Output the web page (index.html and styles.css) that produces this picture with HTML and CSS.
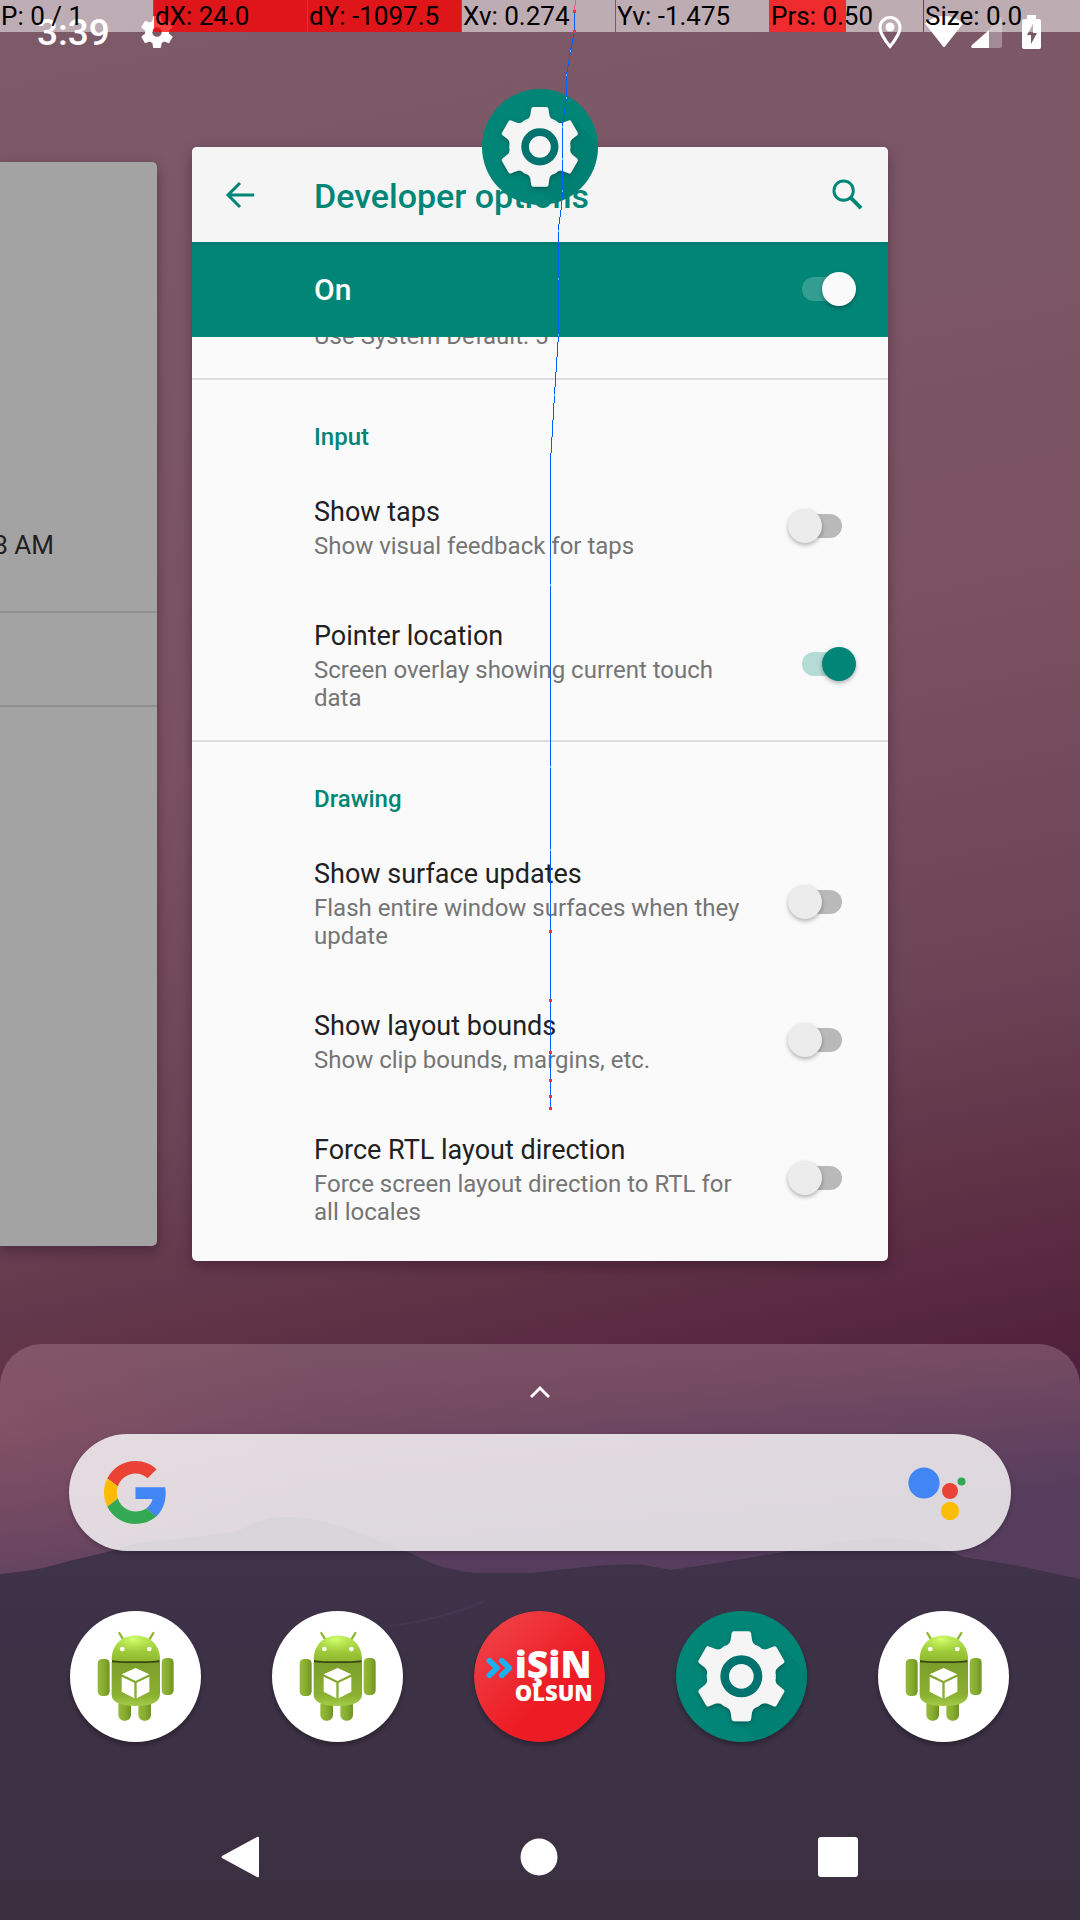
FILE: index.html
```html
<!DOCTYPE html>
<html lang="en">
<head>
<meta charset="utf-8">
<meta name="viewport" content="width=device-width, initial-scale=1">
<title>Recent apps</title>
<link rel="stylesheet" href="styles.css">
</head>
<body>
<svg class="defs" aria-hidden="true">
  <defs>
    <linearGradient id="bot-light" x1="0" y1="0" x2="0" y2="1">
      <stop offset="0" stop-color="#b4e34e"/><stop offset="1" stop-color="#8fb92e"/>
    </linearGradient>
    <linearGradient id="bot-body" x1="0" y1="0" x2="0" y2="1">
      <stop offset="0" stop-color="#7c9e2b"/><stop offset=".75" stop-color="#8cb032"/><stop offset="1" stop-color="#a4cc48"/>
    </linearGradient>
    <linearGradient id="bot-arm" x1="0" y1="0" x2="1" y2="0">
      <stop offset="0" stop-color="#96bb3c"/><stop offset=".5" stop-color="#88ad2e"/><stop offset="1" stop-color="#6f9326"/>
    </linearGradient>
    <radialGradient id="bot-shine" cx=".45" cy=".15" r=".6">
      <stop offset="0" stop-color="#d3ff6e"/><stop offset="1" stop-color="#a2d33a" stop-opacity="0"/>
    </radialGradient>
    <linearGradient id="brand-red" x1="0" y1="0" x2="1" y2="1">
      <stop offset=".1" stop-color="#ef4046"/><stop offset=".6" stop-color="#ed1c24"/>
    </linearGradient>
    <linearGradient id="ridge" x1="0" y1="0" x2="0" y2="1">
      <stop offset="0" stop-color="#3f324a"/><stop offset="1" stop-color="#3b3040"/>
    </linearGradient>
    <filter id="soft" x="-20%" y="-20%" width="140%" height="140%">
      <feDropShadow dx="0" dy="6" stdDeviation="7" flood-color="#00453f" flood-opacity=".6"/>
    </filter>
  </defs>
  <symbol id="bot" viewBox="0 0 393 393">
    <path d="M148 66l12 20M250 66l-12 20" stroke="#8fb733" stroke-width="7" stroke-linecap="round"/>
    <rect x="145" y="265" width="38" height="64" rx="17" fill="url(#bot-arm)"/>
    <rect x="205" y="265" width="38" height="64" rx="17" fill="url(#bot-arm)"/>
    <rect x="83" y="144" width="36" height="111" rx="14" fill="url(#bot-arm)"/>
    <rect x="275" y="141" width="36" height="111" rx="14" fill="url(#bot-arm)"/>
    <path d="M126 146h143v12H126z" fill="#39480f"/>
    <path d="M125 146C125 100 156 74 197.500 74S270 100 270 146Q260 151 197 151T125 146z" fill="url(#bot-light)"/>
    <path d="M125 146C125 100 156 74 197.500 74S270 100 270 146Q260 151 197 151T125 146z" fill="url(#bot-shine)"/>
    <path d="M125 154Q197 160 270 154V250Q270 285 197 285T125 250z" fill="url(#bot-body)"/>
    <circle cx="157" cy="114" r="7" fill="#fff"/><circle cx="238" cy="114" r="7" fill="#fff"/>
    <path d="M197 171l41 19-41 20-42-20zM155 197l38 18v47l-38-20zM200 215l38-18v45l-38 20z" fill="#fff"/>
  </symbol>
  <symbol id="gear" viewBox="0 0 393 393">
    <path d="M320 110L393 185V260L300 393H250L160 320z" fill="#00796b" opacity=".35"/>
    <g filter="url(#soft)" fill="#f5f5f5">
      <circle cx="196" cy="196" r="98"/>
      <g id="teeth" transform="translate(196 196)">
        <path id="tooth" d="M0 0L-52-90L-42-94Q-34-98-32-108L-29-129Q-28-135-22-135H22Q28-135 29-129L32-108Q34-98 42-94L52-90z"/>
        <use href="#tooth" transform="rotate(60)"/><use href="#tooth" transform="rotate(120)"/>
        <use href="#tooth" transform="rotate(180)"/><use href="#tooth" transform="rotate(240)"/>
        <use href="#tooth" transform="rotate(300)"/>
      </g>
    </g>
    <circle cx="196" cy="196" r="50" fill="none" stroke="#00736f" stroke-width="26"/>
  </symbol>
</svg>

<div class="screen">
  <header class="status">
    <time class="clock">3:39</time>
    <svg class="status-gear" viewBox="2 2 20 20" fill="#fff" role="img" aria-label="Settings"><path d="M19.430 12.980c.04-.32.07-.64.07-.98s-.03-.66-.07-.98l2.110-1.650c.19-.15.24-.42.12-.64l-2-3.460c-.12-.22-.39-.3-.61-.22l-2.490 1c-.52-.4-1.080-.73-1.690-.98l-.38-2.650C14.460 2.180 14.250 2 14 2h-4c-.25 0-.46.18-.49.42l-.38 2.650c-.61.25-1.170.59-1.690.98l-2.490-1c-.23-.09-.49 0-.61.22l-2 3.460c-.13.22-.07.49.12.64l2.110 1.650c-.04.32-.07.65-.07.98s.03.66.07.98l-2.110 1.650c-.19.15-.24.42-.12.64l2 3.460c.12.22.39.3.61.22l2.490-1c.52.4 1.080.73 1.690.98l.38 2.650c.03.24.24.42.49.42h4c.25 0 .46-.18.49-.42l.38-2.650c.61-.25 1.170-.59 1.690-.98l2.490 1c.23.09.49 0 .61-.22l2-3.460c.12-.22.07-.49-.12-.64l-2.110-1.650zM12 15a3 3 0 1 1 0-6 3 3 0 0 1 0 6z"/></svg>
    <div class="signals">
      <svg class="pin" viewBox="0 0 24 34" fill="none" role="img" aria-label="Location"><path d="M12 2.500C6.500 2.500 2 6.800 2 12.500C2 19.500 12 31.500 12 31.500S22 19.500 22 12.500C22 6.800 17.500 2.500 12 2.500z" stroke="#fff" stroke-width="3"/><circle cx="12" cy="12" r="4.500" fill="#fff"/></svg>
      <svg class="wifi" viewBox="0 0 38 32" fill="#fff" role="img" aria-label="Wi-Fi"><path d="M0 7.500C11-2.500 27-2.500 38 7.500L20 30.500Q19 31.500 18 30.500z"/></svg>
      <svg class="cell" viewBox="0 0 31 31" fill="#fff" role="img" aria-label="Mobile signal"><path d="M29 0q2 0 2 2v27q0 2-2 2H18V13z" opacity=".3"/><path d="M18 13V31H2q-3 0-1-3z"/></svg>
      <svg class="battery" viewBox="0 0 19 34" fill="#fff" role="img" aria-label="Battery charging"><path fill-rule="evenodd" d="M5 0h9v4h3q2 0 2 2v26q0 2-2 2H2q-2 0-2-2V6q0-2 2-2h3zM11 9L5 20h4v9l6-11h-4z"/></svg>
    </div>
  </header>

  <main class="recents">
    <article class="card card-side" aria-label="Previous app">
      <p class="side-time">8 AM</p>
      <div class="side-row"></div>
    </article>

    <article class="card card-main">
      <div class="toolbar">
        <button class="icon-btn" aria-label="Back"><svg class="arrow" viewBox="0 0 30 28" fill="none" stroke="#008577" stroke-width="3"><path d="M29 14H3M15 2L3 14L15 26"/></svg></button>
        <h1>Developer options</h1>
        <button class="icon-btn" aria-label="Search"><svg class="search-icon" viewBox="0 0 32 32" fill="none" stroke="#008577" stroke-width="3"><circle cx="12" cy="12" r="10"/><path d="M19 19l11 11" stroke-width="4"/></svg></button>
      </div>
      <label class="master"><span>On</span><input class="switch" type="checkbox" checked></label>

      <section class="group clipped">
        <p class="summary">Use System Default: 5</p>
      </section>
      <section class="group">
        <h2>Input</h2>
        <label class="row"><span class="text"><span class="title">Show taps</span><span class="summary">Show visual feedback for taps</span></span><input class="switch" type="checkbox"></label>
        <label class="row"><span class="text"><span class="title">Pointer location</span><span class="summary">Screen overlay showing current touch data</span></span><input class="switch" type="checkbox" checked></label>
      </section>
      <section class="group">
        <h2>Drawing</h2>
        <label class="row"><span class="text"><span class="title">Show surface updates</span><span class="summary">Flash entire window surfaces when they update</span></span><input class="switch" type="checkbox"></label>
        <label class="row"><span class="text"><span class="title">Show layout bounds</span><span class="summary">Show clip bounds, margins, etc.</span></span><input class="switch" type="checkbox"></label>
        <label class="row"><span class="text"><span class="title">Force RTL layout direction</span><span class="summary">Force screen layout direction to RTL for all locales</span></span><input class="switch" type="checkbox"></label>
      </section>
      <button class="app-badge" aria-label="Settings"><svg viewBox="0 0 393 393"><use href="#gear"/></svg></button>
    </article>
  </main>

  <footer class="sheet">
    <svg class="hills" viewBox="0 0 1080 410" preserveAspectRatio="none" aria-hidden="true"><path fill="url(#ridge)" d="M0 64L27 61Q50 57 69 51L103 43L138 33L186 28L234 22C246 18 262 7 282 7C306 6 325 12 344 17L406 41C425 50 440 58 448 58Q465 63 482 63H530L585 57Q625 53 644 55L671 60L723 52L778 43L826 34Q850 29 888 29Q915 29 930 33L964 47L1019 56L1080 69V410H0z"/><path d="M390 116Q440 110 485 91" fill="none" stroke="#5a4060" stroke-width="2" opacity=".3"/></svg>
    <button class="handle" aria-label="All apps"><svg viewBox="0 0 20 14" fill="none" stroke="#fff" stroke-width="3"><path d="M1 12L10 3L19 12"/></svg></button>
    <form class="search">
      <svg class="g-logo" viewBox="0 0 48 48" role="img" aria-label="Google"><path fill="#ea4335" d="M24 9.500c3.540 0 6.710 1.220 9.210 3.600l6.850-6.850C35.900 2.380 30.470 0 24 0 14.620 0 6.510 5.380 2.560 13.220l7.980 6.190C12.430 13.720 17.740 9.500 24 9.500z"/><path fill="#4285f4" d="M46.980 24.550c0-1.570-.15-3.090-.38-4.550H24v9.020h12.940c-.58 2.960-2.260 5.480-4.780 7.180l7.730 6c4.510-4.180 7.090-10.360 7.090-17.650z"/><path fill="#fbbc05" d="M10.530 28.590c-.48-1.450-.76-2.990-.76-4.590s.27-3.140.76-4.590l-7.980-6.190C.92 16.460 0 20.120 0 24c0 3.880.92 7.540 2.560 10.780l7.970-6.190z"/><path fill="#34a853" d="M24 48c6.480 0 11.930-2.130 15.890-5.810l-7.730-6c-2.150 1.450-4.920 2.300-8.160 2.300-6.260 0-11.570-4.220-13.470-9.910l-7.980 6.190C6.510 42.620 14.620 48 24 48z"/></svg>
      <input type="search" aria-label="Search">
      <button type="button" class="assistant" aria-label="Assistant"><svg viewBox="0 0 58 54"><circle cx="16" cy="17" r="15.600" fill="#4285f4"/><circle cx="42" cy="25" r="8" fill="#ea4335"/><circle cx="42" cy="45" r="9.200" fill="#fbbc05"/><circle cx="53.500" cy="15.500" r="4" fill="#34a853"/></svg></button>
    </form>
    <div class="dock">
      <button class="app white" aria-label="App"><svg viewBox="0 0 393 393"><use href="#bot"/></svg></button>
      <button class="app white" aria-label="App"><svg viewBox="0 0 393 393"><use href="#bot"/></svg></button>
      <button class="app" aria-label="İşin Olsun"><svg viewBox="0 0 393 393"><circle cx="196.500" cy="196.500" r="196.500" fill="url(#brand-red)"/><path d="M46 149l23 22-23 22M83 149l23 22-23 22" fill="none" stroke="#1cb0f0" stroke-width="17" stroke-linecap="round" stroke-linejoin="round"/><g fill="#fff" font-family="Open Sans, sans-serif" font-weight="800"><text x="122" y="200" font-size="112">iŞiN</text><text x="122" y="271" font-size="66">OLSUN</text></g></svg></button>
      <button class="app teal" aria-label="Settings"><svg viewBox="0 0 393 393"><use href="#gear"/></svg></button>
      <button class="app white" aria-label="App"><svg viewBox="0 0 393 393"><use href="#bot"/></svg></button>
    </div>
    <nav class="nav">
      <button aria-label="Back"><svg viewBox="0 0 42 42" fill="#fff"><path d="M38 1Q40 0 40 2V40Q40 42 38 41L3 22Q2 21 3 20z"/></svg></button>
      <button aria-label="Home"><svg viewBox="0 0 42 42" fill="#fff"><circle cx="21" cy="21" r="18.500"/></svg></button>
      <button aria-label="Recents"><svg viewBox="0 0 42 42" fill="#fff"><rect x="1" y="1" width="40" height="40" rx="3"/></svg></button>
    </nav>
  </footer>

  <div class="readout">
    <span>P: 0 / 1</span><span class="hot">dX: 24.0</span><span class="hot">dY: -1097.5</span><span>Xv: 0.274</span><span>Yv: -1.475</span><span class="half">Prs: 0.50</span><span class="edge">Size: 0.0</span>
  </div>
  <svg class="trace" viewBox="0 0 1080 1200" width="1080" height="1200" fill="none" shape-rendering="crispEdges" aria-hidden="true">
    <path d="M576 0L574 11" stroke="#f0508c"/>
    <path d="M574.500 11V31L570.500 51L566.500 75V98L562.500 125V191L561.500 207L558.500 228V335L554.500 395L550.500 462V1108" stroke="#0060ff"/>
    <path d="M573 11h3M573 31h3M549 931h3M549 1000h3M549 1052h3M549 1080h3M549 1096h3M549 1108h3" stroke="#ff3030" stroke-width="3"/>
    <path d="M570 51h1M566 75h1M566 98h1M562 127h1M562 159h1M562 191h1M558 231h1M558 279h1M558 335h1M554 395h1M550 585h1M550 767h1M550 850h1" stroke="#5fc0ff" stroke-width="2"/>
  </svg>
</div>
</body>
</html>
```
FILE: styles.css
```css
* { box-sizing: border-box; }

body {
  margin: 0;
  font-family: Roboto, "Noto Sans", sans-serif;
  color: #212121;
}

button {
  border: 0;
  padding: 0;
  background: none;
  cursor: pointer;
}

h1, h2, p { margin: 0; }

svg { display: block; }

.defs {
  position: absolute;
  width: 0;
  height: 0;
}

.screen {
  position: relative;
  min-height: 100vh;
  display: flex;
  flex-direction: column;
  overflow: hidden;
  background: linear-gradient(168deg, #7d5a68 0%, #7b5766 20%, #7b5161 38%, #6c4456 55%, #5f3145 65%, #50203c 74%);
}

/* Status bar */
.status {
  display: flex;
  align-items: center;
  height: 64px;
  padding: 0 39px 0 37px;
  color: #fff;
}

.clock {
  padding-top: 2px;
  font-size: 37px;
  font-weight: 500;
  line-height: 44px;
}

.status-gear {
  width: 32px;
  height: 32px;
  margin-left: 31px;
}

.signals {
  display: flex;
  align-items: center;
  margin-left: auto;
}

.pin { width: 24px; height: 34px; margin-right: 23px; }
.wifi { width: 38px; height: 32px; margin-right: 8px; }
.cell { width: 31px; height: 31px; margin-right: 20px; }
.battery { width: 19px; height: 34px; }

/* Recent app cards */
.recents {
  display: grid;
  grid-template-columns: minmax(0, 1fr) 696px minmax(0, 1fr);
  column-gap: 35px;
  padding: 83px 0;
}

.card {
  box-shadow: 0 5px 14px rgba(30, 5, 20, .35);
}

.card-side {
  margin: 15px 0;
  padding-top: 367px;
  border-radius: 0 5px 5px 0;
  background: #a3a3a3;
}

.side-time {
  display: flex;
  justify-content: flex-end;
  padding: 0 103px 50px 0;
  font-size: 26px;
  line-height: 32px;
  white-space: nowrap;
}

.side-row {
  height: 96px;
  border: solid #8f8f8f;
  border-width: 2px 0;
}

.card-main {
  position: relative;
  padding-bottom: 7px;
  border-radius: 5px;
  background: #fafafa;
}

.toolbar {
  display: flex;
  align-items: center;
  height: 95px;
  padding: 0 25px 0 33px;
  border-radius: 5px 5px 0 0;
  background: #f5f5f5;
}

.toolbar h1 {
  flex: 1;
  margin-left: 59px;
  padding-top: 2px;
  font-size: 34px;
  font-weight: 500;
  line-height: 40px;
  color: #008577;
}

.arrow { width: 30px; height: 28px; }
.search-icon { width: 31px; height: 31px; }

.master {
  display: flex;
  align-items: center;
  justify-content: space-between;
  height: 95px;
  padding: 0 32px 0 122px;
  background: linear-gradient(#007b6e, #008577 6px);
  color: #fff;
  font-size: 30px;
  font-weight: 500;
}

.group + .group { border-top: 2px solid #dcdcdc; }

.clipped {
  display: flex;
  align-items: flex-end;
  height: 41px;
  padding: 0 33px 28px 122px;
  overflow: hidden;
}

.group h2 {
  padding: 43px 33px 15px 122px;
  font-size: 24px;
  font-weight: 500;
  line-height: 28px;
  color: #008577;
}

.row {
  display: flex;
  align-items: center;
  gap: 40px;
  padding: 30px 32px 30px 122px;
}

.row:last-child { padding-bottom: 28px; }

.text {
  flex: 1;
  display: flex;
  flex-direction: column;
  gap: 4px;
}

.title {
  font-size: 27px;
  line-height: 32px;
}

.summary {
  font-size: 24px;
  line-height: 28px;
  color: #757575;
}

.switch {
  appearance: none;
  position: relative;
  flex: none;
  width: 68px;
  height: 34px;
  margin: 0 0 4px;
}

.switch::before {
  content: "";
  position: absolute;
  inset: 5px 14px;
  border-radius: 12px;
  background: #b9b9b9;
}

.switch::after {
  content: "";
  position: absolute;
  top: 0;
  left: 0;
  width: 34px;
  height: 34px;
  border-radius: 50%;
  background: #ececec;
  box-shadow: 0 2px 4px rgba(0, 0, 0, .3);
}

.switch:checked::before { background: #b5dbd6; }

.switch:checked::after {
  left: auto;
  right: 0;
  background: #008577;
}

.master .switch { margin-bottom: 1px; }
.master .switch:checked::before { background: #339d92; }
.master .switch:checked::after { background: #fafafa; }

.app-badge {
  position: absolute;
  top: -58px;
  left: calc(50% - 58px);
  width: 116px;
  height: 116px;
  border-radius: 50%;
  overflow: hidden;
  background: #008577;
}

/* Bottom sheet */
.sheet {
  position: relative;
  flex: 1;
  display: flex;
  flex-direction: column;
  border-radius: 42px 42px 0 0;
  overflow: hidden;
  background: radial-gradient(circle at 0 80px, rgba(146, 88, 104, .4), transparent 320px), linear-gradient(175deg, #7d5667 0, #764c62 90px, #6a4560 150px, #563d5d 240px);
}

.sheet > * { position: relative; }

.sheet > .hills {
  position: absolute;
  left: 0;
  bottom: 0;
  width: 100%;
  height: 410px;
}

.handle {
  display: flex;
  align-items: center;
  justify-content: center;
  height: 90px;
  padding-top: 5px;
}

.handle svg { width: 20px; height: 14px; }

.search {
  display: flex;
  align-items: center;
  height: 117px;
  margin: 0 69px;
  padding: 0 45px 0 35px;
  border-radius: 59px;
  background: rgba(255, 255, 255, .8);
  box-shadow: 0 2px 5px rgba(0, 0, 0, .2);
}

.g-logo { width: 63px; height: 63px; }

.search input {
  flex: 1;
  min-width: 0;
  height: 64px;
  border: 0;
  outline: 0;
  background: none;
  font: inherit;
  font-size: 30px;
}

.assistant svg { width: 58px; height: 54px; }

.dock {
  display: flex;
  justify-content: space-between;
  padding: 60px 71px 52px 70px;
}

.app {
  width: 131px;
  height: 131px;
  border-radius: 50%;
  overflow: hidden;
  box-shadow: 0 3px 5px rgba(0, 0, 0, .3);
}

.white { background: #fff; }
.teal { background: #008577; }

.nav {
  display: flex;
  justify-content: center;
  height: 126px;
  padding-right: 2px;
}

.nav button {
  display: flex;
  align-items: center;
  justify-content: center;
  width: 299px;
}

.nav svg { width: 42px; height: 42px; }

/* Pointer readout */
.readout {
  position: absolute;
  top: 0;
  left: 0;
  right: 0;
  display: grid;
  grid-template-columns: repeat(6, 153px) 1fr;
  column-gap: 1px;
  color: #000;
  font-size: 26px;
  line-height: 32px;
  white-space: nowrap;
}

.readout span {
  padding-left: 1px;
  background: rgba(255, 255, 255, .5);
}

.readout .hot { background: rgba(255, 0, 0, .75); }

.readout .half {
  background: linear-gradient(90deg, rgba(255, 0, 0, .75) 50%, transparent 50%), rgba(255, 255, 255, .5);
}

.readout .edge { box-shadow: -1px 0 #e0161a; }

.trace {
  position: absolute;
  top: 0;
  left: 0;
  pointer-events: none;
}
```
